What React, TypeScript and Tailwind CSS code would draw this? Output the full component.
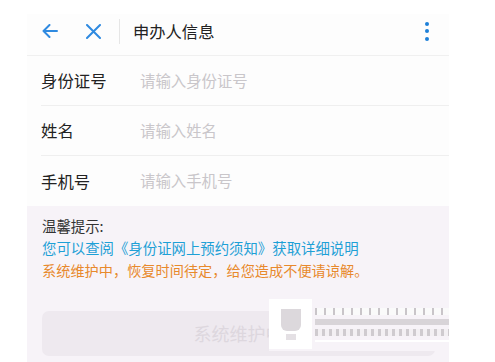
import React from "react";

const font = { fontFamily: '"Noto Sans CJK SC", "Noto Sans", sans-serif' };

function Row({ label, placeholder, last }: { label: string; placeholder: string; last?: boolean }) {
  return (
    <div className="pl-[14px]">
      <div className={`flex h-[50px] items-center ${last ? "" : "border-b border-[#efefef]"}`}>
        <div className="w-[99px] text-[16.4px] text-[#222]">{label}</div>
        <div className="text-[15.4px] text-[#c9c6ca]">{placeholder}</div>
      </div>
    </div>
  );
}

export default function App() {
  return (
    <div className="h-[362px] w-[495px] overflow-hidden bg-white pl-[27px] pt-[14px]" style={font}>
      <div className="flex h-[348px] w-[422px] flex-col bg-[#fdfdfd]">
        <div className="flex h-[42px] shrink-0 items-center border-b border-[#f0f0f0] pb-[7px]">
          <svg width="16" height="14" viewBox="0 0 16 14" className="ml-[15px]" fill="none" stroke="#2f8ae0" strokeWidth="2" strokeLinecap="round" strokeLinejoin="round">
            <path d="M15 7H1.5M7.5 1 1.5 7l6 6" />
          </svg>
          <svg width="15" height="15" viewBox="0 0 15 15" className="ml-[28px]" fill="none" stroke="#2f8ae0" strokeWidth="2" strokeLinecap="round">
            <path d="M1 1l13 13M14 1 1 14" />
          </svg>
          <div className="ml-[18px] h-[25px] w-px bg-[#e6e6e6]" />
          <div className="ml-[13px] text-[16.3px] text-[#222]">申办人信息</div>
          <div className="ml-auto mr-[20px] flex flex-col gap-[3.5px]">
            <div className="h-[4px] w-[4px] rounded-full bg-[#1e80d8]" />
            <div className="h-[4px] w-[4px] rounded-full bg-[#1e80d8]" />
            <div className="h-[4px] w-[4px] rounded-full bg-[#1e80d8]" />
          </div>
        </div>
        <Row label="身份证号" placeholder="请输入身份证号" />
        <Row label="姓名" placeholder="请输入姓名" />
        <Row label="手机号" placeholder="请输入手机号" last />
        <div className="flex flex-1 flex-col bg-[#f7f3f8] px-[15px] pt-[9px]">
          <div className="text-[14.4px] leading-[22px] text-[#333]">温馨提示:</div>
          <div className="text-[14.4px] leading-[22px] text-[#1ea0d6]">您可以查阅《身份证网上预约须知》获取详细说明</div>
          <div className="text-[14.2px] leading-[22px] text-[#e8892c]">系统维护中，恢复时间待定，给您造成不便请谅解。</div>
          <div className="relative mt-[30px] flex h-[45px] w-[393px] items-center justify-center rounded-[7px] bg-[#eee9ef]">
            <span className="text-[18px] text-[#ddd7de]">系统维护中</span>
            <div className="absolute left-[227px] top-[-12px] flex h-[52px] w-[180px] bg-[#f7f3f8]">
              <div className="flex h-[50px] w-[43px] flex-col items-center justify-center bg-white">
                <div className="h-[22px] w-[20px] rounded-b-[6px] bg-[#dcd8dc]" />
                <div className="mt-[3px] h-[6px] w-[10px] bg-[#e4e0e4]" />
              </div>
              <div className="ml-[3px] flex flex-1 flex-col justify-center gap-[4px]">
                <div className="h-[7px] w-full bg-[repeating-linear-gradient(90deg,#c9c5c9_0_2px,#fafafa_2px_9px)]" />
                <div className="h-[6px] w-full bg-[#d8d4d8]" />
                <div className="h-[7px] w-full bg-[repeating-linear-gradient(90deg,#cfcbcf_0_3px,#f3f0f3_3px_7px)]" />
                <div className="h-[2px] w-full bg-white" />
              </div>
            </div>
          </div>
        </div>
      </div>
    </div>
  );
}
